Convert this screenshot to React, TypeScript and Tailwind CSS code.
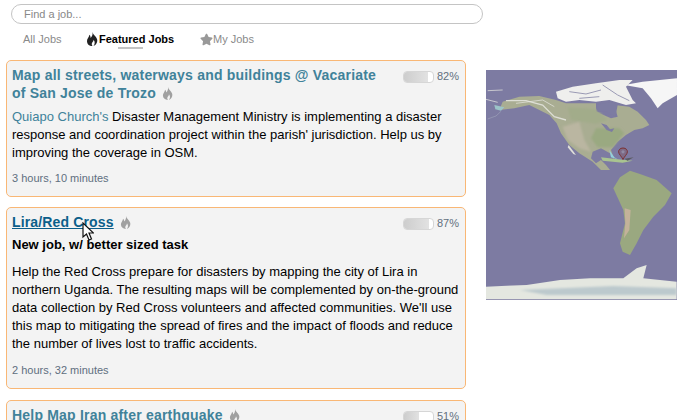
import React from "react";
import { FaStar } from "react-icons/fa";

const Progress: React.FC<{ value: number }> = ({ value }) => (
    <div className="flex items-center self-start gap-[3px] shrink-0 mt-[4px]">
        <div className="w-[31px] h-[12px] rounded-[4px] border border-[#d6d6d6] bg-white overflow-hidden">
            <div
                className="h-full bg-gradient-to-r from-[#cdcdcd] to-[#e2e2e2]"
                style={{ width: `${value}%` }}
            />
        </div>
        <span className="text-[11px] leading-[13px] text-[#62707e]">{value}%</span>
    </div>
);

const FlameIcon: React.FC<{ className: string }> = ({ className }) => (
    <svg viewBox="0 0 12 14" className={className} fill="currentColor">
        <path d="M6.5 0 C7 3 10 4 11 7 C12 10 10 13 7.5 14 C9 12 9.2 10 7.6 7.8 C7.6 9.5 6.5 10 6 11 C5.5 12 5.8 13 6.5 14 C3 14 1 12 1 9 C1 6.5 3 5.5 3.4 2.8 C4.5 4 4.6 5 4.6 6 C6 4.5 7 2.5 6.5 0 Z" />
    </svg>
);

const Flame: React.FC = () => (
    <FlameIcon className="inline-block ml-[6px] w-[11px] h-[13px] text-[#a0a0a0] align-[-2px]" />
);

const WorldMap: React.FC = () => (
    <svg viewBox="0 0 191 230" className="w-[191px] h-[230px] block">
        <defs>
            <filter id="soft">
                <feGaussianBlur stdDeviation="0.5" />
            </filter>
            <filter id="softer" x="-30%" y="-30%" width="160%" height="160%">
                <feGaussianBlur stdDeviation="3" />
            </filter>
        </defs>
        <rect width="191" height="230" fill="#7d7ba2" />
        <g filter="url(#soft)">
            <g transform="scale(0.3333)">
                <path
                    fill="#a9ad92"
                    d="M50 95 L100 80 L160 78 L210 90 L240 100 L330 100 L330 125 L375 145 L395 140 L385 105 L430 110 L455 125 L480 150 L490 165 L470 175 L445 180 L420 195 L395 215 L375 240 L385 270 L372 250 L345 235 L320 245 L315 265 L330 280 L345 270 L360 285 L372 300 L345 300 L320 275 L280 250 L250 225 L225 190 L212 160 L190 135 L130 105 L85 115 L40 120 Z"
                />
                <path fill="#9aa981" filter="url(#softer)" d="M330 175 L400 175 L415 190 L380 232 L335 232 L315 205 Z" />
                <path fill="#a2ac8a" filter="url(#softer)" d="M245 112 L330 118 L365 150 L330 162 L255 150 Z" />
                <path fill="#bab6a1" filter="url(#softer)" d="M230 170 L280 155 L295 210 L315 245 L280 235 L245 210 Z" />
                <path fill="#7d7ba2" d="M330 105 L375 95 L395 105 L388 142 L365 125 L335 125 Z" />
                <path fill="#7d7ba2" d="M345 160 L362 165 L372 178 L385 175 L378 186 L362 180 Z" />
                <path fill="#f6f6f6" d="M415 45 L470 35 L573 25 L573 75 L530 100 L515 115 L495 85 L470 55 Z" />
                <path fill="#efefed" d="M210 65 L260 50 L330 40 L400 30 L440 30 L420 50 L440 90 L450 100 L420 105 L370 90 L330 95 L280 90 L240 95 L215 85 Z" />
                <path fill="none" stroke="#9a9ab4" strokeWidth="3" d="M250 65 L300 72 L345 60 M280 85 L340 80 M350 45 L395 75 L430 92" />
                <path fill="none" stroke="#e6e6e0" strokeWidth="4" opacity="0.85" d="M60 92 L120 92 L170 105 L205 140 L240 150" />
                <path fill="none" stroke="#e6e6e0" strokeWidth="2.5" opacity="0.85" d="M90 100 L170 90 L205 110 M0 88 L35 97 M5 62 L50 60" />
                <path fill="#9cc4c8" d="M25 105 L55 112 L45 122 L28 118 Z" />
                <path fill="none" stroke="#a8aec0" strokeWidth="1.5" d="M5 147 L30 138 L45 124" />
                <path fill="#e0e0da" d="M248 225 L270 255 L262 252 L245 232 Z" />
                <path fill="#93d0dc" d="M370 240 L385 262 L395 268 L375 262 Z" />
                <path fill="#a9c490" d="M345 262 L395 268 L440 272 L410 278 L350 272 Z" />
                <path fill="#5a5a60" d="M415 266 L443 262 L425 272 Z" />
            </g>
            <g transform="translate(-6,110) scale(0.3333)">
                <path fill="#9aa880" d="M400 25 L420 -8 L450 -28 L480 -18 L530 0 L575 40 L555 75 L520 110 L490 150 L470 190 L450 225 L428 215 L420 190 L435 130 L430 90 Z" />
                <path fill="#c3b29a" d="M434 85 L452 90 L448 150 L432 175 L436 130 Z" />
                <path fill="#e4e7e0" d="M18 320 L140 315 L240 300 L330 295 L430 295 L470 265 L500 255 L490 295 L590 305 L590 358 L18 358 Z" />
                <path fill="#bcc9cd" filter="url(#softer)" d="M120 330 L400 318 L590 325 L590 345 L200 345 Z" />
            </g>
        </g>
        <g transform="translate(137,84)">
            <path
                d="M0 -6 C-3.2 -6 -4.4 -3.8 -4.4 -2.2 C-4.4 0 -1.4 2.4 0 5.5 C1.4 2.4 4.4 0 4.4 -2.2 C4.4 -3.8 3.2 -6 0 -6 Z"
                fill="#7e6a85"
                stroke="#7c2f30"
                strokeWidth="1"
            />
            <circle cx="0" cy="-2.2" r="1.6" fill="#8f8aa5" />
        </g>
    </svg>
);

export default function App() {
    return (
        <div
            className="h-[420px] w-[677px] overflow-hidden bg-white text-[13px] text-black"
            style={{ fontFamily: '"Liberation Sans", Arial, sans-serif' }}
        >
            <div className="pl-[11px] pt-[4px] w-[483px]">
                <div className="h-[20px] rounded-full border border-[#c4c4c4] pl-[12px] text-[11px] leading-[18px] text-[#888]">
                    Find a job...
                </div>
            </div>
            <ul className="flex items-center pl-[23px] h-[24px] mt-[3px] text-[11px] text-[#8a8a8a]">
                <li className="w-[63px]">All Jobs</li>
                <li className="relative flex items-center w-[114px] font-bold text-black">
                    <FlameIcon className="w-[12px] h-[14px] text-[#222]" />
                    <span className="ml-[1px]">Featured Jobs</span>
                    <span className="absolute left-[32px] top-[16px] w-[25px] h-[2px] bg-[#c4c4c4]" />
                </li>
                <li className="flex items-center">
                    <FaStar className="text-[13px] text-[#999]" />
                    My Jobs
                </li>
            </ul>
            <div className="flex mt-[9px]">
                <div className="ml-[6px] w-[460px] flex flex-col gap-[10px]">
                    <section className="h-[137px] shrink-0 rounded-[5px] border border-[#f9b775] bg-[#f3f3f3] pl-[5px] pr-[6px] pt-[5px]">
                        <div className="flex justify-between">
                            <h2 className="w-[375px] text-[14px] leading-[18px] font-bold text-[#40829a] tracking-[0.2px]">
                                Map all streets, waterways and buildings @ Vacariate of San Jose de Trozo
                                <Flame />
                            </h2>
                            <Progress value={82} />
                        </div>
                        <p className="mt-[6px] leading-[18px]">
                            <span className="text-[#40829a]">Quiapo Church's</span> Disaster Management Ministry is implementing a disaster response and coordination project within the parish' jurisdiction. Help us by improving the coverage in OSM.
                        </p>
                        <p className="mt-[7px] text-[11px] leading-[18px] text-[#5f6f80]">3 hours, 10 minutes</p>
                    </section>
                    <section className="relative h-[182px] shrink-0 rounded-[5px] border border-[#f9b775] bg-[#f3f3f3] pl-[5px] pr-[6px] pt-[5px]">
                        <div className="flex justify-between">
                            <h2 className="text-[14px] leading-[18px] font-bold text-[#0b5f8a] tracking-[0.15px]">
                                <span className="underline">Lira/Red Cross</span>
                                <Flame />
                            </h2>
                            <Progress value={87} />
                        </div>
                        <p className="mt-[5px] font-bold leading-[18px]">New job, w/ better sized task</p>
                        <p className="mt-[9px] leading-[18px]">
                            Help the Red Cross prepare for disasters by mapping the city of Lira in northern Uganda. The resulting maps will be complemented by on-the-ground data collection by Red Cross volunteers and affected communities. We'll use this map to mitigating the spread of fires and the impact of floods and reduce the number of lives lost to traffic accidents.
                        </p>
                        <p className="mt-[8px] text-[11px] leading-[18px] text-[#5f6f80]">2 hours, 32 minutes</p>
                        <svg viewBox="0 0 12 19" className="absolute left-[75px] top-[14px] w-[12px] h-[19px]">
                            <path d="M1 1 L1 15 L4.5 12 L7 18 L9.5 17 L7 11 L11.5 11 Z" fill="#fff" stroke="#111" strokeWidth="1.2" />
                        </svg>
                    </section>
                    <section className="mt-[1px] h-[60px] shrink-0 rounded-[5px] border border-[#f9b775] bg-[#f3f3f3] pl-[5px] pr-[6px] pt-[5px]">
                        <div className="flex justify-between">
                            <h2 className="text-[14px] leading-[18px] font-bold text-[#40829a] tracking-[0.2px]">
                                Help Map Iran after earthquake
                                <Flame />
                            </h2>
                            <Progress value={51} />
                        </div>
                    </section>
                </div>
                <div className="ml-[20px] mt-[10px]">
                    <WorldMap />
                </div>
            </div>
        </div>
    );
}
